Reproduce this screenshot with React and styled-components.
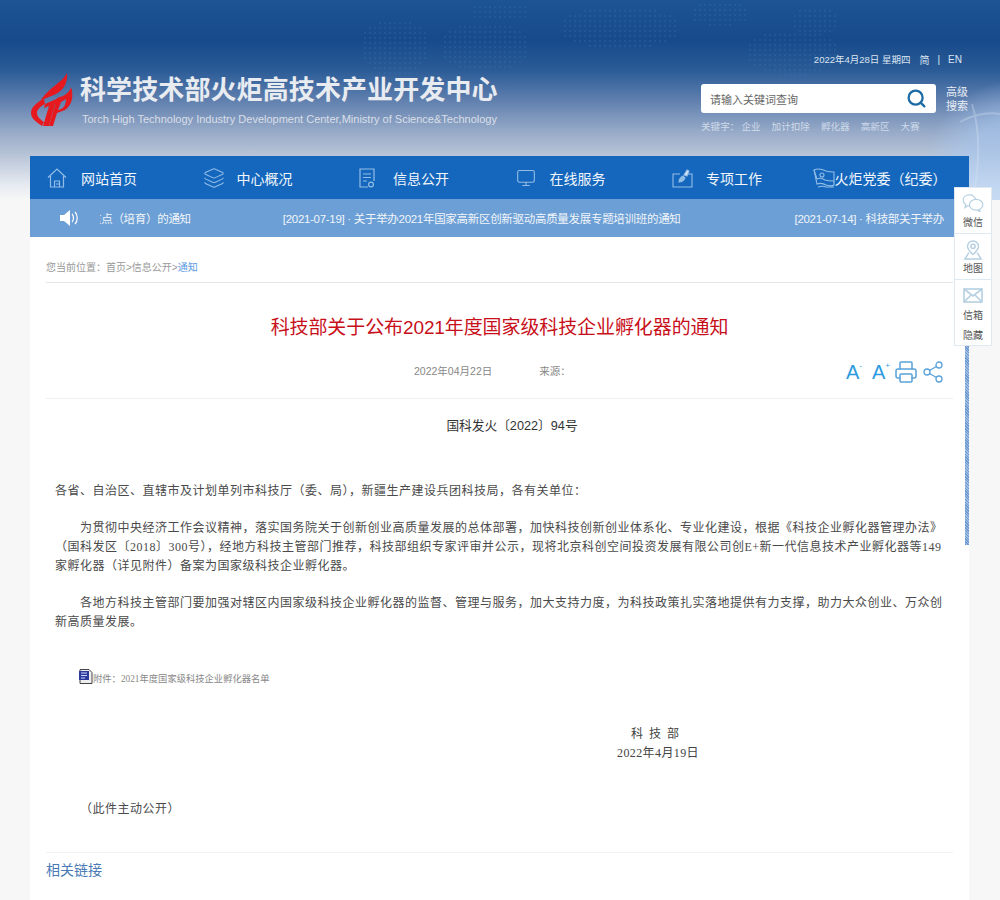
import styled, { createGlobalStyle } from "styled-components";
import { Layers, Monitor, Printer, Share2, Search } from "lucide-react";

const GlobalStyle = createGlobalStyle`
    html, body { margin: 0; padding: 0; }
    body { font-family: "Liberation Sans", "Noto Sans CJK SC", sans-serif; background: #f7f7f7; }
`;

const Page = styled.div`
    position: relative;
    height: 900px;
    overflow: hidden;
    background: linear-gradient(180deg, #1d5494 0, #174a8a 40px, #2a5b97 70px, #5f7fae 100px, #94a8c7 130px, #b9c5d8 156px, #e6eaf1 185px, #f7f7f7 200px) no-repeat;
    background-color: #f7f7f7;
`;
const Decor = styled.svg`
    position: absolute;
    left: 0;
    top: 0;
`;
const Header = styled.header`
    position: relative;
    height: 156px;
    display: flex;
    justify-content: space-between;
    padding: 0 33px 0 30px;
    box-sizing: border-box;
`;
const Brand = styled.div`
    display: flex;
    align-items: flex-start;
    padding-top: 72px;
`;
const BrandText = styled.div`
    margin-left: 6px;
    padding-top: 1px;
`;
const BrandName = styled.div`
    font-size: 26px;
    line-height: 34px;
    font-weight: 700;
    letter-spacing: 0.1px;
    color: #e8ebf0;
    white-space: nowrap;
`;
const BrandSub = styled.div`
    font-size: 11px;
    line-height: 16px;
    margin: 4px 0 0 2px;
    color: #d9dfe8;
    white-space: nowrap;
`;
const Tools = styled.div`
    width: 266px;
    padding-top: 51px;
`;
const DateRow = styled.div`
    display: flex;
    justify-content: flex-end;
    align-items: center;
    height: 16px;
    font-size: 9.5px;
    color: #dbe5f1;
    white-space: nowrap;
    padding-right: 5px;
`;
const LangLink = styled.span`
    margin-left: ${props => props.gap}px;
    font-size: 10px;
`;
const SearchRow = styled.div`
    display: flex;
    margin-top: 17px;
`;
const SearchBox = styled.div`
    flex: none;
    width: 235px;
    height: 29px;
    background: #fff;
    border-radius: 3px;
    display: flex;
    align-items: center;
    justify-content: space-between;
    padding: 0 9px;
    box-sizing: border-box;
    font-size: 11px;
    color: #666;
`;
const Advanced = styled.div`
    flex: none;
    width: 22px;
    margin-left: 10px;
    font-size: 11px;
    line-height: 14px;
    color: #e8edf4;
    padding-top: 1px;
`;
const Keywords = styled.div`
    display: flex;
    margin-top: 7px;
    font-size: 9.6px;
    line-height: 14px;
    color: #cfdbe9;
    white-space: nowrap;
`;
const Keyword = styled.span`
    margin-left: ${props => props.gap || 11}px;
`;

const Main = styled.div`
    position: relative;
    width: 939px;
    margin-left: 30px;
`;
const Nav = styled.nav`
    height: 43px;
    background: #1467bd;
    display: grid;
    grid-template-columns: repeat(6, 1fr);
`;
const NavItem = styled.div`
    display: flex;
    align-items: center;
    padding-left: ${props => props.pad}px;
    font-size: 14px;
    color: #f2f6fb;
    white-space: nowrap;
`;
const NavIcon = styled.span`
    display: flex;
    align-items: center;
    width: ${props => props.width}px;
    color: #93bde6;
`;
const Ticker = styled.div`
    height: 38px;
    background: #6c9fd5;
    display: flex;
    align-items: center;
    padding-left: 30px;
`;
const Speaker = styled.svg`
    flex: none;
    margin-right: 22px;
`;
const TickerView = styled.div`
    width: 846px;
    overflow: hidden;
    display: flex;
    font-size: 11.5px;
    letter-spacing: -0.3px;
    color: #f1f5fa;
    white-space: nowrap;
`;
const TickerItem = styled.span`
    flex: none;
    margin-left: ${props => props.offset}px;
`;

const Content = styled.main`
    background: #fff;
    height: 663px;
    padding: 24px 16px 0;
    box-sizing: border-box;
`;
const Crumbs = styled.div`
    font-size: 10px;
    line-height: 14px;
    color: #999;
    padding-bottom: 7px;
    border-bottom: 1px solid #e6e6e6;
`;
const CrumbLink = styled.span`
    color: ${props => props.active ? "#5c9ae0" : "#999"};
`;
const Title = styled.h1`
    margin: 31px 0 0;
    font-size: 19px;
    line-height: 28px;
    font-weight: 400;
    letter-spacing: -0.1px;
    color: #c8101a;
    text-align: center;
`;
const Meta = styled.div`
    display: flex;
    align-items: center;
    height: 20px;
    margin-top: 18px;
    padding: 0 8px 18px 368px;
    border-bottom: 1px solid #f0f0f0;
    font-size: 10.5px;
    color: #888;
    white-space: nowrap;
`;
const Source = styled.span`
    margin-left: 47px;
`;
const MetaTools = styled.div`
    margin-left: auto;
    padding-top: 3px;
    display: flex;
    align-items: center;
    color: #5aa3da;
`;
const ShareIcon = styled(Share2)`
    margin-left: 3px;
`;
const FontBtn = styled.span`
    display: flex;
    align-items: flex-start;
    width: ${props => props.width}px;
    font-size: 20px;
    line-height: 22px;
    color: #2b9ae0;
`;
const FontSign = styled.span`
    font-size: 8px;
    line-height: 10px;
`;
const DocNo = styled.div`
    margin-top: 17px;
    padding-left: 25px;
    font-size: 12.7px;
    line-height: 20px;
    text-align: center;
    color: #333;
`;
const Article = styled.article`
    margin: 46px 0 0 9px;
    font-family: "Liberation Serif", "Noto Sans CJK SC", serif;
    font-size: 12px;
    letter-spacing: 0.5px;
    line-height: 19px;
    color: #4a4a4a;
`;
const Para = styled.p`
    margin: 0 0 18px;
    white-space: nowrap;
    padding-left: ${props => props.indent ? "25px" : "0"};
`;
const ParaLine = styled.span`
    display: block;
    margin-left: ${props => props.flush ? "-25px" : "0"};
`;
const Attach = styled.div`
    display: flex;
    align-items: flex-start;
    height: 18px;
    margin: 38px 0 0 24px;
    font-size: 9.3px;
    letter-spacing: 0;
    line-height: 18px;
    color: #888;
`;
const AttachIcon = styled.svg`
    flex: none;
    margin-top: -1px;
`;
const Sign = styled.div`
    margin: ${props => props.top}px 0 0 ${props => props.left}px;
    letter-spacing: ${props => props.spacing}px;
    white-space: nowrap;
    color: #444;
`;
const Note = styled.div`
    margin: 37px 0 0 25px;
`;
const Related = styled.div`
    margin-top: 33px;
    padding-top: 7px;
    border-top: 1px solid #f2f2f2;
    font-size: 14px;
    line-height: 20px;
    color: #4a7ab5;
`;

const ScrollThumb = styled.div`
    position: absolute;
    left: 935px;
    top: 81px;
    width: 4px;
    height: 308px;
    background: repeating-linear-gradient(45deg, #6f9bd0 0 1px, #9dbce0 1px 2px);
`;
const SidePanel = styled.aside`
    position: absolute;
    left: 954px;
    top: 187px;
    width: 38px;
    height: 159px;
    background: #fff;
    border: 1px solid #dfe9f2;
    box-sizing: border-box;
`;
const SideItem = styled.div`
    height: 46px;
    display: flex;
    flex-direction: column;
    align-items: center;
    justify-content: flex-end;
    padding-bottom: 3px;
    box-sizing: border-box;
    font-size: 10px;
    line-height: 14px;
    color: #555;
    border-bottom: ${props => props.last ? "none" : "1px solid #dfe9f2"};

    svg {
        margin-bottom: ${props => props.iconGap}px;
    }
`;
const SideHide = styled.div`
    margin-top: 3px;
    text-align: center;
    font-size: 10px;
    line-height: 14px;
    color: #555;
`;

// dotted world map behind the header
const dots = [];
[[360, 18, 70, 58], [440, 22, 90, 50], [470, 2, 60, 20], [560, 6, 120, 44], [690, 0, 60, 26], [745, 30, 95, 46], [790, 6, 50, 28]].forEach(([x, y, w, h]) => {
    for (let i = 0; i < w; i += 5) {
        for (let j = 0; j < h; j += 5) {
            const dx = (i - w / 2) / (w / 2);
            const dy = (j - h / 2) / (h / 2);
            if (dx * dx + dy * dy < 1) dots.push([x + i, y + j]);
        }
    }
});

const navItems = [
    { text: "网站首页", pad: 17, width: 34, icon: "home" },
    { text: "中心概况", pad: 16, width: 34, icon: "layers" },
    { text: "信息公开", pad: 16, width: 34, icon: "doc" },
    { text: "在线服务", pad: 16, width: 34, icon: "monitor" },
    { text: "专项工作", pad: 16, width: 34, icon: "brush" },
    { text: "火炬党委（纪委）", pad: 0, width: 22, icon: "flag" },
];

function NavGlyph({ name }) {
    if (name === "layers") return <Layers size={22} strokeWidth={1.1} />;
    if (name === "monitor") return <Monitor size={20} strokeWidth={1.3} />;
    if (name === "home") {
        return (
            <svg width="20" height="20" viewBox="0 0 20 20" fill="none" stroke="currentColor" strokeWidth="1.2">
                <path d="M1 9.5 10 1l9 8.500M3.500 8v11h13V8M7.500 19v-6h5v6M9 16h3.500" />
            </svg>
        );
    }
    if (name === "doc") {
        return (
            <svg width="16" height="20" viewBox="0 0 16 20" fill="none" stroke="currentColor" strokeWidth="1.2">
                <path d="M9 19H1V1h14v12M4 6h8M4 9.500h8M4 13h4" />
                <circle cx="12" cy="16.5" r="2.4" />
            </svg>
        );
    }
    if (name === "brush") {
        return (
            <svg width="21" height="20" viewBox="0 0 21 20" fill="none" stroke="currentColor" strokeWidth="1.1">
                <path d="M8 6H1v13h19V6h-4" />
                <path d="M7 14c0-3 2-5 4-6l2 2c-1 2-3 4-6 4Z" fill="currentColor" />
                <path d="M12 7l3-5 2 1-2 5Z" fill="#dbe8f6" />
            </svg>
        );
    }
    return (
        <svg width="22" height="20" viewBox="0 0 22 20" fill="none" stroke="currentColor" strokeWidth="1.1">
            <path d="M1 2c4-2 8-1 12 1 3 1 6 1 8 1v9c-3 0-6 0-9-1-3-2-6-2-8-1Z" />
            <path d="M1 2l3 14c3-1 6-1 9 1 3 1 6 1 8 0v-4M5 19c3-1 6-1 8 0h8" />
            <circle cx="9" cy="7" r="2" />
        </svg>
    );
}

export default function App() {
    return (
        <Page>
            <GlobalStyle />
            <Decor width="1000" height="200" viewBox="0 0 1000 200">
                <defs>
                    <radialGradient id="globe" cx="0.5" cy="0.5" r="0.5">
                        <stop offset="0.55" stopColor="#a8c8f0" stopOpacity="0.6" />
                        <stop offset="1" stopColor="#a8c8f0" stopOpacity="0" />
                    </radialGradient>
                </defs>
                {dots.map(([x, y]) => (
                    <circle key={x + "-" + y} cx={x} cy={y} r="1" fill="#3f86c0" opacity="0.28" />
                ))}
                <circle cx="1015" cy="170" r="90" fill="url(#globe)" />
                <path d="M960 122c14-8 30-10 40-8M972 104c8 25 8 55 2 90" fill="none" stroke="#dfe9f5" strokeWidth="2" opacity="0.3" />
            </Decor>
            <Header>
                <Brand>
                    <svg width="44" height="56" viewBox="0 0 44 56" fill="#e6191f">
                        <path d="M37 1c1 9-3 17-11 21-6 3-12 4-16 8 4-8 12-14 18-19 4-3 7-6 9-10Z" />
                        <path d="M14 27C7 30 1 35 1 41c0 6 6 9 11 13l2-4c-3-2-7-5-7-9 0-4 4-7 8-9Z" />
                        <path d="M15 32l16-7-1 5-5 2-6 22h-6l6-20-5 2Z" />
                        <path fillRule="evenodd" d="M33 24c4-2 7-5 8-9 3 9 1 18-6 23l-8 3-4 13h-4l8-28Zm-2 6-3 8c5-1 8-4 8-11Z" />
                    </svg>
                    <BrandText>
                        <BrandName>科学技术部火炬高技术产业开发中心</BrandName>
                        <BrandSub>Torch High Technology Industry Development Center,Ministry of Science&amp;Technology</BrandSub>
                    </BrandText>
                </Brand>
                <Tools>
                    <DateRow>
                        2022年4月28日 星期四
                        <LangLink gap={9}>简</LangLink>
                        <LangLink gap={8}>|</LangLink>
                        <LangLink gap={8}>EN</LangLink>
                    </DateRow>
                    <SearchRow>
                        <SearchBox>
                            请输入关键词查询
                            <Search size={21} strokeWidth={2.6} color="#1b6aa5" />
                        </SearchBox>
                        <Advanced>高级搜索</Advanced>
                    </SearchRow>
                    <Keywords>
                        关键字：
                        <Keyword gap={2}>企业</Keyword>
                        <Keyword>加计扣除</Keyword>
                        <Keyword>孵化器</Keyword>
                        <Keyword>高新区</Keyword>
                        <Keyword>大赛</Keyword>
                    </Keywords>
                </Tools>
            </Header>
            <Main>
                <Nav>
                    {navItems.map(item => (
                        <NavItem key={item.text} pad={item.pad}>
                            <NavIcon width={item.width}>
                                <NavGlyph name={item.icon} />
                            </NavIcon>
                            {item.text}
                        </NavItem>
                    ))}
                </Nav>
                <Ticker>
                    <Speaker width="18" height="16" viewBox="0 0 18 16" fill="#fff">
                        <path d="M0 5h4l6-5v16l-6-5H0Z" />
                        <path d="M12 4c2 2 2 6 0 8M15 2c3 3 3 9 0 12" fill="none" stroke="#fff" strokeWidth="1.2" />
                    </Speaker>
                    <TickerView>
                        <TickerItem offset={-10}>重点（培育）的通知</TickerItem>
                        <TickerItem offset={92}>[2021-07-19] · 关于举办2021年国家高新区创新驱动高质量发展专题培训班的通知</TickerItem>
                        <TickerItem offset={114}>[2021-07-14] · 科技部关于举办</TickerItem>
                    </TickerView>
                </Ticker>
                <Content>
                    <Crumbs>
                        您当前位置：
                        <CrumbLink>首页&gt;信息公开&gt;</CrumbLink>
                        <CrumbLink active>通知</CrumbLink>
                    </Crumbs>
                    <Title>科技部关于公布2021年度国家级科技企业孵化器的通知</Title>
                    <Meta>
                        2022年04月22日
                        <Source>来源：</Source>
                        <MetaTools>
                            <FontBtn width={26}>A<FontSign>-</FontSign></FontBtn>
                            <FontBtn width={22}>A<FontSign>+</FontSign></FontBtn>
                            <Printer size={24} strokeWidth={1.5} />
                            <ShareIcon size={24} strokeWidth={1.3} />
                        </MetaTools>
                    </Meta>
                    <DocNo>国科发火〔2022〕94号</DocNo>
                    <Article>
                        <Para>各省、自治区、直辖市及计划单列市科技厅（委、局），新疆生产建设兵团科技局，各有关单位：</Para>
                        <Para indent>
                            <ParaLine>为贯彻中央经济工作会议精神，落实国务院关于创新创业高质量发展的总体部署，加快科技创新创业体系化、专业化建设，根据《科技企业孵化器管理办法》</ParaLine>
                            <ParaLine flush>（国科发区〔2018〕300号），经地方科技主管部门推荐，科技部组织专家评审并公示，现将北京科创空间投资发展有限公司创E+新一代信息技术产业孵化器等149</ParaLine>
                            <ParaLine flush>家孵化器（详见附件）备案为国家级科技企业孵化器。</ParaLine>
                        </Para>
                        <Para indent>
                            <ParaLine>各地方科技主管部门要加强对辖区内国家级科技企业孵化器的监督、管理与服务，加大支持力度，为科技政策扎实落地提供有力支撑，助力大众创业、万众创</ParaLine>
                            <ParaLine flush>新高质量发展。</ParaLine>
                        </Para>
                        <Attach>
                            <AttachIcon width="14" height="15" viewBox="0 0 14 15">
                                <path d="M1 .5h9l3 3v11H1Z" fill="#eee" stroke="#444" />
                                <rect x="0" y="2" width="10" height="9" fill="#2a3a9a" />
                                <path d="M2 4h6M2 6.500h6M2 9h4" stroke="#cdd4ff" strokeWidth="1" />
                            </AttachIcon>
                            附件：2021年度国家级科技企业孵化器名单
                        </Attach>
                        <Sign top={37} left={576} spacing={6}>科技部</Sign>
                        <Sign top={0} left={562} spacing={0.4}>2022年4月19日</Sign>
                        <Note>（此件主动公开）</Note>
                    </Article>
                    <Related>相关链接</Related>
                </Content>
                <ScrollThumb />
            </Main>
            <SidePanel>
                <SideItem iconGap={4}>
                    <svg width="22" height="18" viewBox="0 0 24 20" fill="none" stroke="#b6d0e2" strokeWidth="1.3">
                        <path d="M15 6C14 3 11 1 8 1 4 1 1 3.500 1 7c0 2 1 3.500 3 5l-1 3 3-2c1 .3 2 .4 3 .4" />
                        <ellipse cx="15.5" cy="12" rx="7.5" ry="6" />
                        <path d="M19 17l1 3-3-2" />
                    </svg>
                    微信
                </SideItem>
                <SideItem iconGap={2}>
                    <svg width="20" height="20" viewBox="0 0 22 22" fill="none" stroke="#b6d0e2" strokeWidth="1.6">
                        <path d="M11 16C7.500 13 5 10 5 7a6 6 0 0 1 12 0C17 10 14.500 13 11 16Z" />
                        <circle cx="11" cy="7" r="2.4" />
                        <path d="M6.500 14 2 21h18l-4.500-7" />
                    </svg>
                    地图
                </SideItem>
                <SideItem iconGap={6} last>
                    <svg width="20" height="15" viewBox="0 0 20 15" fill="none" stroke="#b6d0e2" strokeWidth="1.6">
                        <rect x="1" y="1" width="18" height="13" />
                        <path d="M1 1l9 7 9-7M1 14l7-7M19 14l-7-7" />
                    </svg>
                    信箱
                </SideItem>
                <SideHide>隐藏</SideHide>
            </SidePanel>
        </Page>
    );
}
